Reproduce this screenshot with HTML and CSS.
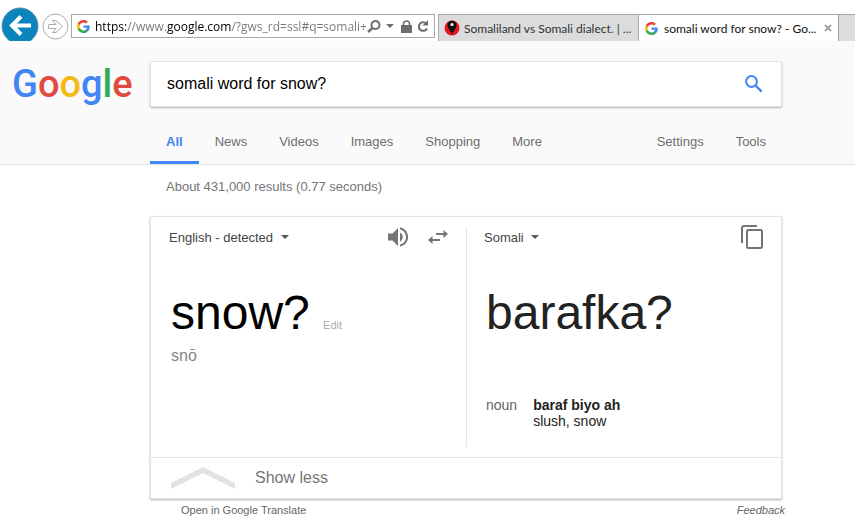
FILE: index.html
```html
<!DOCTYPE html>
<html lang="en">
<head>
    <meta charset="UTF-8">
    <meta name="viewport" content="width=device-width, initial-scale=1.0">
    <title>somali word for snow? - Google Search</title>
    <link rel="stylesheet" href="styles.css">
</head>
<body>
    <svg class="symbols" aria-hidden="true">
        <symbol id="g-icon" viewBox="0 0 48 48">
            <path fill="#ea4335" d="M24 9.5c3.54 0 6.71 1.22 9.21 3.6l6.85-6.85C35.9 2.38 30.47 0 24 0 14.62 0 6.51 5.38 2.56 13.22l7.98 6.19C12.43 13.72 17.74 9.5 24 9.5z"/>
            <path fill="#4285f4" d="M46.98 24.55c0-1.57-.15-3.09-.38-4.55H24v9.02h12.94c-.58 2.96-2.26 5.48-4.78 7.18l7.73 6c4.51-4.18 7.09-10.36 7.09-17.65z"/>
            <path fill="#fbbc05" d="M10.53 28.59c-.48-1.45-.76-2.99-.76-4.59s.27-3.14.76-4.59l-7.98-6.19C.92 16.46 0 20.12 0 24c0 3.88.92 7.54 2.56 10.78l7.97-6.19z"/>
            <path fill="#34a853" d="M24 48c6.48 0 11.93-2.13 15.89-5.81l-7.73-6c-2.15 1.45-4.92 2.3-8.16 2.3-6.26 0-11.57-4.22-13.47-9.91l-7.98 6.19C6.51 42.62 14.62 48 24 48z"/>
        </symbol>
    </svg>

    <div class="toolbar">
        <button class="back" aria-label="Back">
            <svg width="38" height="34" viewBox="0 0 38 34">
                <circle cx="19" cy="19" r="18" fill="#0a84bd" stroke="#5c8fa8"/>
                <path d="M30 18.500H12M20 9.500L11 18.500L20 27.500" fill="none" stroke="#fff" stroke-width="4"/>
            </svg>
        </button>
        <button class="forward" aria-label="Forward">
            <svg width="27" height="27" viewBox="0 0 27 27">
                <circle cx="13.500" cy="13.500" r="12.500" fill="#fff" stroke="#aaa"/>
                <path d="M6.500 11.500H14L10.500 7.500H14L20.500 13.500L14 19.500H10.500L14 15.500H6.500Z" fill="#fff" stroke="#aaa"/>
            </svg>
        </button>
        <div class="address">
            <svg width="13" height="13"><use href="#g-icon"/></svg>
            <input type="text" value="https://www.google.com/?gws_rd=ssl#q=somali+" aria-label="Address">
            <button class="find" aria-label="Search">
                <svg width="14" height="13" viewBox="0 0 14 13">
                    <circle cx="8.500" cy="5" r="4" fill="none" stroke="#6d6d6d" stroke-width="2"/>
                    <path d="M5.500 8L1 12" stroke="#6d6d6d" stroke-width="2.500"/>
                </svg>
            </button>
            <button aria-label="Show address list">
                <svg width="8" height="4" viewBox="0 0 8 4"><path d="M0 0H8L4 4Z" fill="#6d6d6d"/></svg>
            </button>
            <button class="lock" aria-label="Security report">
                <svg width="11" height="13" viewBox="0 0 11 13">
                    <path d="M0 5H11V13H0Z" fill="#6d6d6d"/>
                    <path d="M2.500 6V4A3 3 0 0 1 8.500 4V6" fill="none" stroke="#6d6d6d" stroke-width="1.500"/>
                </svg>
            </button>
            <button aria-label="Refresh">
                <svg width="12" height="13" viewBox="0 0 12 13">
                    <path d="M9.200 3.500A4.300 4.300 0 1 0 10 8.500" fill="none" stroke="#6d6d6d" stroke-width="2"/>
                    <path d="M11 0V5.500H5.500Z" fill="#6d6d6d"/>
                </svg>
            </button>
        </div>
        <div class="tabs">
            <div class="tab">
                <svg width="16" height="16" viewBox="0 0 16 16">
                    <circle cx="8" cy="8" r="7.500" fill="#e8141c"/>
                    <path d="M8 15C7.500 11.500 3.500 9 3.500 5.200A4.500 4.500 0 0 1 12.500 5.200C12.500 9 8.500 11.500 8 15Z" fill="#111"/>
                    <circle cx="8" cy="4.500" r="1.600" fill="#fff"/>
                </svg>
                <span>Somaliland vs Somali dialect. | ...</span>
            </div>
            <div class="tab active">
                <svg width="13" height="13"><use href="#g-icon"/></svg>
                <span>somali word for snow? - Go...</span>
                <button aria-label="Close tab">
                    <svg width="8" height="8" viewBox="0 0 8 8"><path d="M1 1L7 7M7 1L1 7" stroke="#a3a3a3" stroke-width="2"/></svg>
                </button>
            </div>
            <div class="tab new"></div>
        </div>
    </div>

    <header>
        <a class="logo" href="#" aria-label="Google"><span class="blue">G</span><span class="red">o</span><span class="yellow">o</span><span class="blue">g</span><span class="green">l</span><span class="red">e</span></a>
        <form class="search">
            <input type="text" name="q" value="somali word for snow?" aria-label="Search">
            <button type="button" aria-label="Google Search">
                <svg width="18" height="18" viewBox="0 0 18 18">
                    <circle cx="6.500" cy="6.500" r="5.400" fill="none" stroke="#4285f4" stroke-width="2"/>
                    <path d="M10.500 10.500L16.700 16.700" stroke="#4285f4" stroke-width="2.400"/>
                </svg>
            </button>
        </form>
        <nav>
            <a class="selected" href="#">All</a>
            <a href="#">News</a>
            <a href="#">Videos</a>
            <a href="#">Images</a>
            <a href="#">Shopping</a>
            <a href="#">More</a>
            <a class="settings" href="#">Settings</a>
            <a href="#">Tools</a>
        </nav>
    </header>

    <main>
        <div class="stats">About 431,000 results (0.77 seconds)</div>
        <div class="card">
            <div class="panes">
                <section class="pane source">
                    <div class="pane-top">
                        <select aria-label="Source language">
                            <option>English - detected</option>
                        </select>
                        <svg class="caret" width="8" height="4" viewBox="0 0 8 4"><path d="M0 0H8L4 4Z" fill="#555"/></svg>
                        <button class="listen" aria-label="Listen">
                            <svg width="20" height="20" viewBox="0 0 20 20" fill="#757575">
                                <path d="M0 6.500V13.500H4.500L10 19V1L4.500 6.500Z"/>
                                <path d="M12 5.500V14.500A5 5 0 0 0 12 5.500Z"/>
                                <path d="M12 1.200A9 9 0 0 1 12 18.800" fill="none" stroke="#757575" stroke-width="2"/>
                            </svg>
                        </button>
                        <button aria-label="Swap languages">
                            <svg width="20" height="14" viewBox="0 0 20 14" fill="#757575">
                                <path d="M8 3H15.500V0L20 4L15.500 8V5H8Z"/>
                                <path d="M12 9H4.500V6L0 10L4.500 14V11H12Z"/>
                            </svg>
                        </button>
                    </div>
                    <div class="phrase">snow? <a href="#">Edit</a></div>
                    <div class="phonetic">snō</div>
                </section>
                <section class="pane target">
                    <div class="pane-top">
                        <select aria-label="Target language">
                            <option>Somali</option>
                        </select>
                        <svg class="caret" width="8" height="4" viewBox="0 0 8 4"><path d="M0 0H8L4 4Z" fill="#555"/></svg>
                        <button class="copy" aria-label="Copy">
                            <svg width="22" height="24" viewBox="0 0 22 24" fill="none" stroke="#757575" stroke-width="2">
                                <path d="M1 18V3A2 2 0 0 1 3 1H16"/>
                                <rect x="6" y="5" width="15" height="18" rx="1.500"/>
                            </svg>
                        </button>
                    </div>
                    <div class="phrase">barafka?</div>
                    <dl>
                        <dt>noun</dt>
                        <dd><strong>baraf biyo ah</strong><br>slush, snow</dd>
                    </dl>
                </section>
            </div>
            <button class="show-less">
                <svg width="64" height="22" viewBox="0 0 64 22"><path d="M0 16L32 0L64 16V22L32 6L0 22Z" fill="#e2e2e2"/></svg>
                Show less
            </button>
        </div>
        <div class="links">
            <a href="#">Open in Google Translate</a>
            <a class="feedback" href="#">Feedback</a>
        </div>
    </main>
</body>
</html>
```
FILE: styles.css
```css
* {
    box-sizing: border-box;
}
body {
    margin: 0;
    background-color: #ffffff;
    font-family: "Liberation Sans", Arial, sans-serif;
    font-size: 13px;
    color: #222222;
}
a {
    color: inherit;
    text-decoration: none;
}
button {
    display: flex;
    align-items: center;
    padding: 0;
    border: none;
    background: none;
    font-family: inherit;
    cursor: pointer;
}
svg {
    display: block;
    flex: none;
}
.symbols {
    position: absolute;
    width: 0;
    height: 0;
}

/* browser toolbar */
.toolbar {
    display: flex;
    align-items: flex-end;
    padding-top: 7px;
    font-family: "Open Sans", "Noto Sans", sans-serif;
    font-size: 12px;
}
.back {
    margin-left: 1px;
}
.forward {
    margin: 0 2px 1px 3px;
}
.address {
    display: flex;
    flex: 0 1 364px;
    align-items: center;
    height: 24px;
    margin-bottom: 3px;
    padding: 0 5px;
    border: 1px solid #a9a9a9;
}
.address input {
    flex: 1;
    min-width: 0;
    height: 20px;
    margin-left: 5px;
    padding: 0;
    border: none;
    outline: none;
    font: inherit;
    background: linear-gradient(to right, #000 31px, #777 31px, #777 72px, #000 72px, #000 137px, #777 137px);
    -webkit-background-clip: text;
    background-clip: text;
    color: transparent;
}
.address button {
    margin-left: 5px;
}
.address .find {
    margin-left: 1px;
}
.address .lock {
    margin-left: 7px;
}
.tabs {
    display: flex;
    flex: 1;
    height: 27px;
    margin-left: 3px;
    border-top: 1px solid #a9a9a9;
    font-family: Lato, sans-serif;
}
.tab {
    display: flex;
    flex: 0 1 200px;
    align-items: center;
    min-width: 0;
    padding: 0 0 0 5px;
    border-left: 1px solid #a9a9a9;
    background-color: #dcdcdc;
    color: #333333;
    white-space: nowrap;
}
.tab span {
    flex: 1;
    margin-left: 4px;
    overflow: hidden;
}
.tab.active {
    padding: 0 6px;
    background-color: #ffffff;
    color: #111111;
}
.tab.active span {
    margin-left: 6px;
}
.tab.new {
    flex: 1;
}

/* search header */
header {
    display: grid;
    grid-template-columns: 150px minmax(0, 632px);
    padding-top: 20px;
    border-bottom: 1px solid #e5e5e5;
    background-color: #fafafa;
}
.logo {
    padding-left: 12px;
    font-family: Roboto, sans-serif;
    font-size: 38px;
    font-weight: 500;
    line-height: 46px;
}
.blue {
    color: #4285f4;
}
.red {
    color: #e04a3f;
}
.yellow {
    color: #f4b912;
}
.green {
    color: #34a853;
}
.search {
    display: flex;
    height: 46px;
    padding: 0 18px 0 16px;
    border: 1px solid #e4e4e4;
    border-radius: 2px;
    background-color: #ffffff;
    box-shadow: 0 1px 2px rgba(0, 0, 0, 0.3);
}
.search input {
    flex: 1;
    min-width: 0;
    padding: 0;
    border: none;
    outline: none;
    font: inherit;
    font-size: 16px;
    color: #000000;
}
nav {
    display: flex;
    grid-column: 2;
    margin-top: 12px;
    color: #6e6e6e;
}
nav a {
    height: 45px;
    padding: 0 16px;
    line-height: 45px;
}
nav .selected {
    border-bottom: 3px solid #4285f4;
    font-weight: bold;
    color: #4285f4;
}
nav .settings {
    margin-left: auto;
}

/* results */
main {
    max-width: 782px;
    padding-left: 150px;
}
.stats {
    padding-left: 16px;
    line-height: 43px;
    margin-bottom: 8px;
    color: #757575;
}
.card {
    border: 1px solid #e4e4e4;
    box-shadow: 0 1px 2px rgba(0, 0, 0, 0.3);
}
.panes {
    display: grid;
    grid-template-columns: 1fr 1fr;
    padding: 10px 0;
}
.pane {
    min-height: 220px;
    padding: 0 18px;
}
.target {
    padding-left: 17px;
    border-left: 1px solid #e4e4e4;
}
.pane-top {
    display: flex;
    align-items: center;
    height: 20px;
}
.pane-top select {
    appearance: none;
    padding: 0;
    border: none;
    outline: none;
    background: none;
    font: inherit;
    color: #444444;
}
.caret {
    margin-left: 7px;
}
.listen {
    margin: 0 20px 0 auto;
}
.copy {
    margin-left: auto;
}
.phrase {
    margin: 38px 0 5px 2px;
    font-size: 48px;
    line-height: 56px;
}
.source .phrase {
    color: #000000;
}
.phrase a {
    font-size: 11px;
    line-height: 12px;
    color: #aaaaaa;
}
.phonetic {
    margin-left: 2px;
    font-size: 16px;
    line-height: 20px;
    color: #878787;
}
dl {
    display: flex;
    gap: 16px;
    margin: 56px 0 0 2px;
    font-size: 14px;
    line-height: 16px;
}
dt {
    color: #666666;
}
dd {
    margin: 0;
}
.show-less {
    width: 100%;
    height: 41px;
    padding-left: 20px;
    gap: 20px;
    border-top: 1px solid #e4e4e4;
    font-size: 16px;
    color: #757575;
}
.links {
    display: flex;
    justify-content: space-between;
    margin-right: -3px;
    padding-left: 31px;
    font-size: 11px;
    line-height: 22px;
    color: #666666;
}
.feedback {
    font-style: italic;
}
```
